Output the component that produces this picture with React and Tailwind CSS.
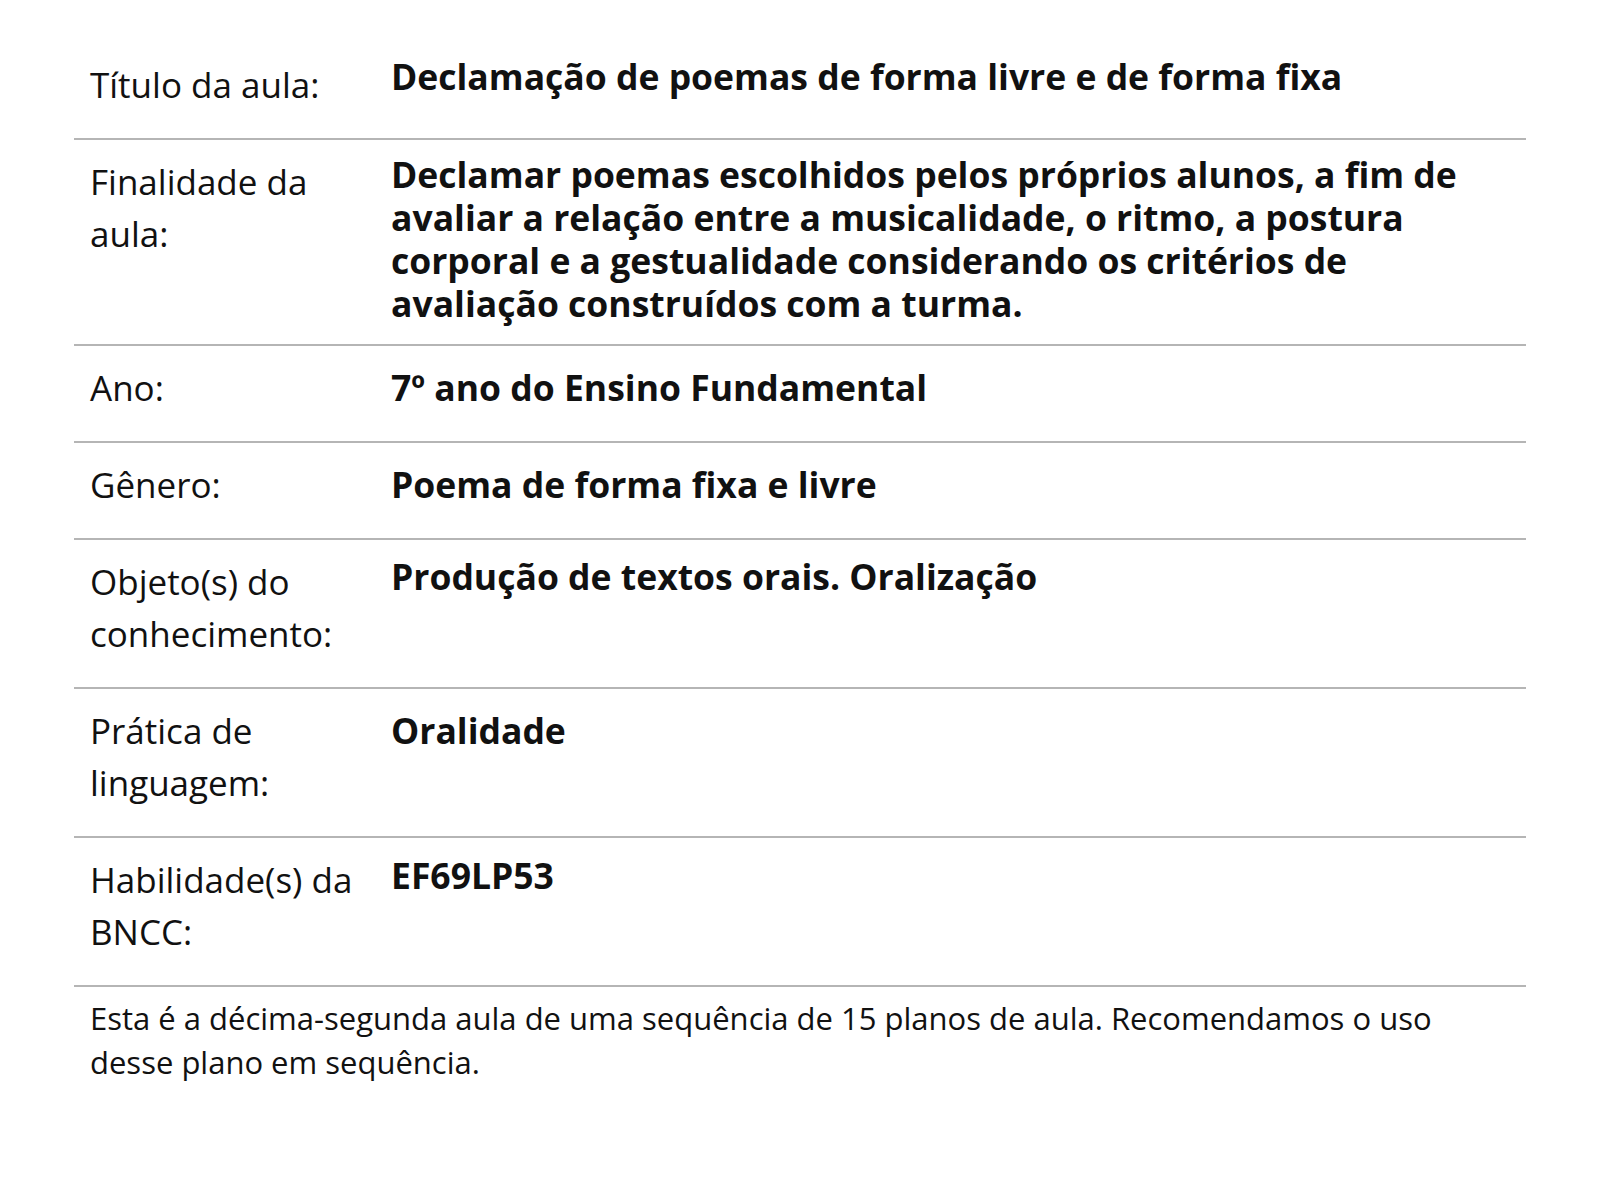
import React from "react";

const rows = [
  { label: "Título da aula:", value: "Declamação de poemas de forma livre e de forma fixa", nudge: "-mt-[4px]" },
  {
    label: "Finalidade da aula:",
    value:
      "Declamar poemas escolhidos pelos próprios alunos, a fim de avaliar a relação entre a musicalidade, o ritmo, a postura corporal e a gestualidade considerando os critérios de avaliação construídos com a turma.",
    nudge: "-mt-[3px] pb-[3px]",
  },
  { label: "Ano:", value: "7º ano do Ensino Fundamental", nudge: "mt-[4px]" },
  { label: "Gênero:", value: "Poema de forma fixa e livre", nudge: "mt-[4px]" },
  { label: "Objeto(s) do conhecimento:", value: "Produção de textos orais. Oralização", nudge: "-mt-[1px]" },
  { label: "Prática de linguagem:", value: "Oralidade", nudge: "mt-[4px]" },
  { label: "Habilidade(s) da BNCC:", value: "EF69LP53", nudge: "" },
];

const App = () => {
  return (
    <div className="min-h-screen bg-white px-[74px] pt-[43px] font-['Open_Sans',sans-serif] text-[#111]">
      {/* Lesson data table */}
      <div className="flex flex-col">
        {rows.map((row) => (
          <div key={row.label} className="flex items-start border-b-2 border-[#b5b5b5] pt-[16px] pb-[16px]">
            <div className="w-[317px] shrink-0 pl-4 pr-4 pb-[11px] text-[35px] leading-[52px]">{row.label}</div>
            <div className={`flex-1 pr-[40px] text-[35.5px] font-bold leading-[43px] ${row.nudge}`}>{row.value}</div>
          </div>
        ))}
      </div>

      <p className="pl-4 pr-[60px] pt-[9px] text-[31px] leading-[44px]">
        Esta é a décima-segunda aula de uma sequência de 15 planos de aula. Recomendamos o uso desse plano em sequência.
      </p>
    </div>
  );
};

export default App;
